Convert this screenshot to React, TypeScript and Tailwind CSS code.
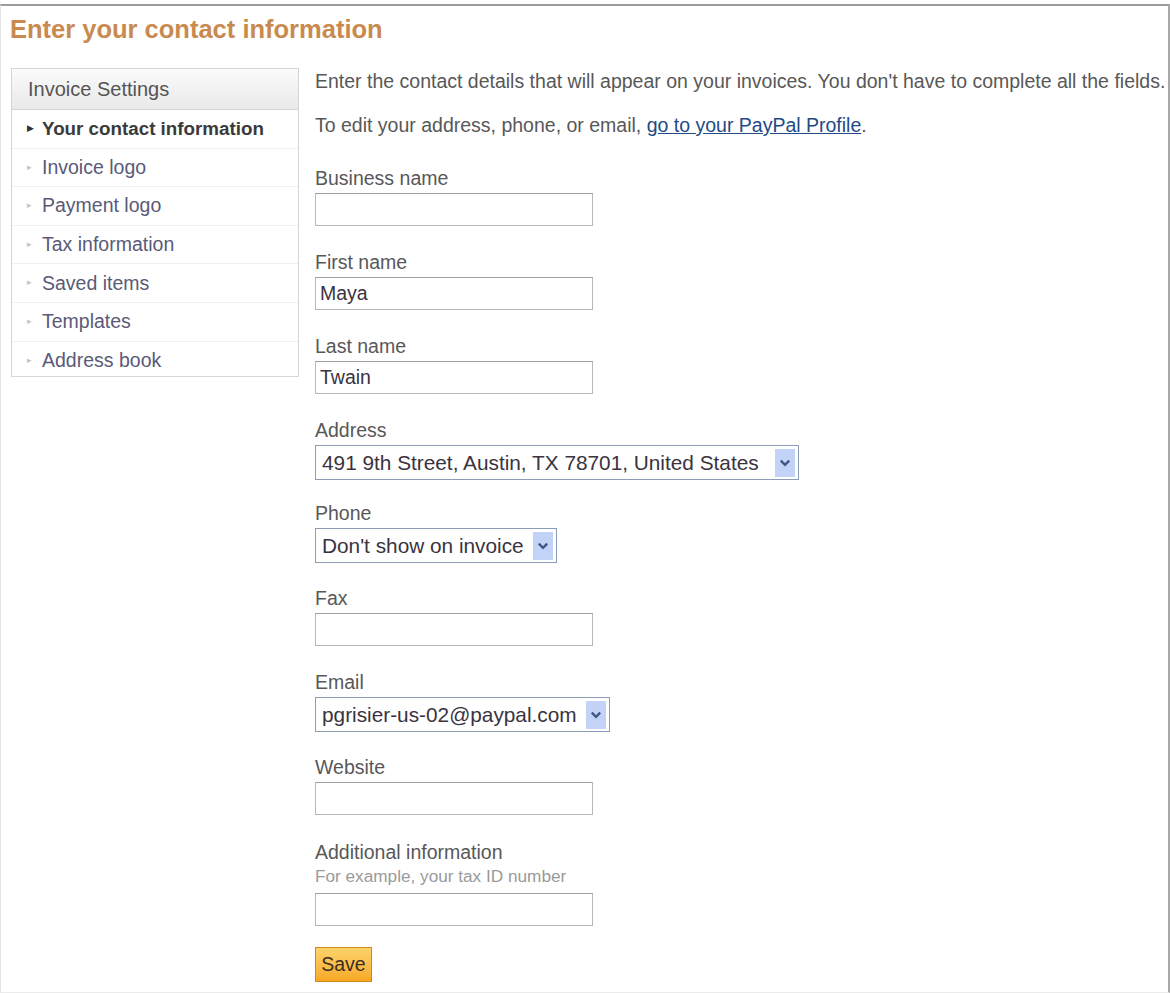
const NAV = [
  "Your contact information",
  "Invoice logo",
  "Payment logo",
  "Tax information",
  "Saved items",
  "Templates",
  "Address book",
];

function Chevron() {
  return (
    <span className="ml-auto mr-[3px] flex h-[28px] w-[20px] items-center justify-center bg-[#c3d3f7]">
      <svg width="12" height="8" viewBox="0 0 12 8">
        <path d="M1.8 1.6 L6 5.8 L10.2 1.6" stroke="#3f5688" strokeWidth="2.4" fill="none" />
      </svg>
    </span>
  );
}

function Label({ children }: { children: React.ReactNode }) {
  return <div className="h-[22px] text-[19.5px] leading-[22px] text-[#585858]">{children}</div>;
}

function TextBox({ value = "", className = "mt-[4px]" }: { value?: string; className?: string }) {
  return (
    <div
      className={`flex h-[33px] w-[278px] items-center border border-[#b8b8b8] border-t-[#a0a0a0] bg-white px-[4px] text-[19.5px] text-[#3a3340] ${className}`}
    >
      {value}
    </div>
  );
}

function Select({ value, width }: { value: string; width: string }) {
  return (
    <div
      className={`mt-[4px] flex h-[35px] items-center border border-[#8a9cb8] bg-white pl-[6px] text-[20.8px] text-[#3a3340] ${width}`}
    >
      <span className="whitespace-nowrap">{value}</span>
      <Chevron />
    </div>
  );
}

export default function App() {
  return (
    <div className="min-h-[993px] bg-white pt-[4px] font-['Liberation_Sans',Arial,sans-serif]">
      <div className="h-[989px] border-t-2 border-r-2 border-l border-b border-t-[#9c9c9c] border-r-[#a8a8a8] border-l-[#e4e4e4] border-b-[#ececec] pl-[9px] pr-[2px]">
        <h1 className="mt-[8px] text-[25.5px] font-bold leading-[30px] text-[#c98a4f]">
          Enter your contact information
        </h1>

        <div className="mt-[24px] flex">
          <aside className="ml-[1px] h-[309px] w-[288px] shrink-0 border border-[#d6d6d6]">
            <div className="flex h-[41px] items-center border-b border-[#d4d4d4] bg-gradient-to-b from-[#fbfbfb] to-[#e9e9e9] pl-[16px] text-[20px] text-[#555]">
              Invoice Settings
            </div>
            {NAV.map((item, i) => (
              <div
                key={item}
                className={`flex h-[38.6px] items-center pl-[15px] text-[19.5px] ${
                  i < NAV.length - 1 ? "border-b border-[#efefef]" : ""
                }`}
              >
                <span className={`w-[15px] text-[9px] ${i === 0 ? "text-[#333]" : "text-[#c4c4c4]"}`}>
                  {i === 0 ? "▶" : "▸"}
                </span>
                <span className={i === 0 ? "text-[18.8px] font-bold text-[#3a3a3a]" : "text-[#5a5a78]"}>
                  {item}
                </span>
              </div>
            ))}
          </aside>

          <main className="ml-[16px] text-[19.5px] text-[#585858]">
            <p className="mt-[2px] whitespace-nowrap leading-[22px]">
              Enter the contact details that will appear on your invoices. You don't have to complete all the fields.
            </p>
            <p className="mt-[22px] whitespace-nowrap leading-[22px]">
              To edit your address, phone, or email,{" "}
              <a href="#" className="text-[#244a86] underline">
                go to your PayPal Profile
              </a>
              .
            </p>

            <div className="mt-[31px]">
              <Label>Business name</Label>
              <TextBox />
            </div>
            <div className="mt-[25px]">
              <Label>First name</Label>
              <TextBox value="Maya" />
            </div>
            <div className="mt-[25px]">
              <Label>Last name</Label>
              <TextBox value="Twain" />
            </div>
            <div className="mt-[25px]">
              <Label>Address</Label>
              <Select value="491 9th Street, Austin, TX 78701, United States" width="w-[484px]" />
            </div>
            <div className="mt-[22px]">
              <Label>Phone</Label>
              <Select value="Don't show on invoice" width="w-[242px]" />
            </div>
            <div className="mt-[24px]">
              <Label>Fax</Label>
              <TextBox />
            </div>
            <div className="mt-[25px]">
              <Label>Email</Label>
              <Select value="pgrisier-us-02@paypal.com" width="w-[295px]" />
            </div>
            <div className="mt-[24px]">
              <Label>Website</Label>
              <TextBox />
            </div>
            <div className="mt-[26px]">
              <Label>Additional information</Label>
              <div className="mt-[4px] text-[17.2px] leading-[19px] text-[#9a9a9a]">For example, your tax ID number</div>
              <TextBox className="mt-[7px]" />
            </div>
            <button className="mt-[21px] h-[35px] w-[57px] border border-[#d08a1c] bg-gradient-to-b from-[#ffd36a] to-[#f6a823] text-[19.5px] text-[#3a3020]">
              Save
            </button>
          </main>
        </div>
      </div>
    </div>
  );
}
